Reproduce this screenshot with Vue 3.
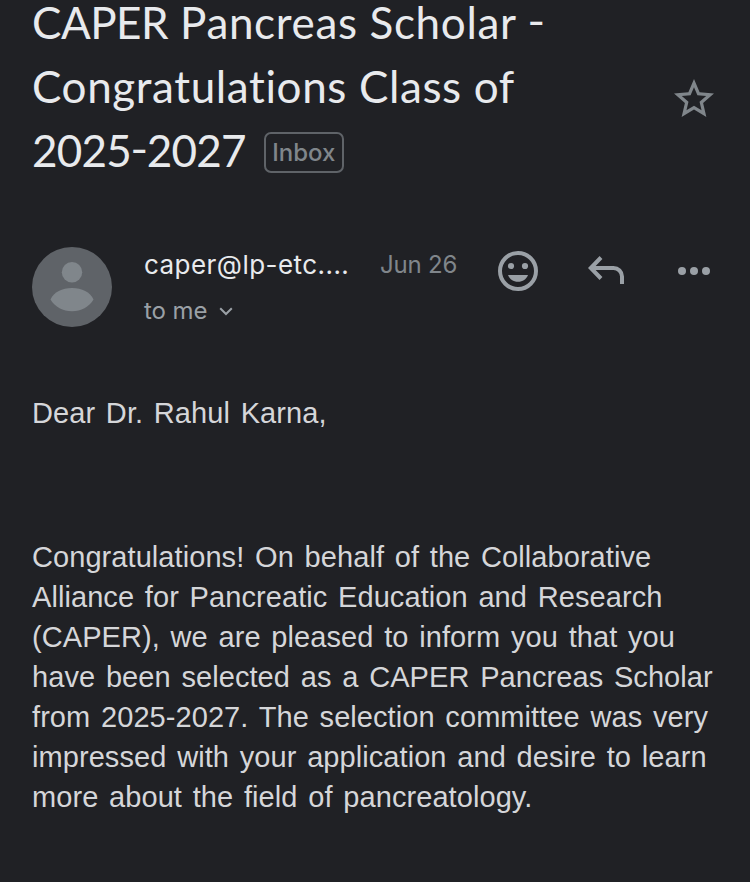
<template>
  <div class="mail">
    <header class="subject">
      <h1>
        <span class="line first"><span class="caps">CAPER</span> Pancreas Scholar <i>-</i></span>
        <span class="line second">Congratulations Class of</span>
        <span class="line third"><span class="years">2025<i>-</i>2027</span><span class="label">Inbox</span></span>
      </h1>
      <button class="star" aria-label="Star">
        <svg width="48" height="48" viewBox="0 0 24 24">
          <path d="M22 9.24l-7.19-.62L12 2 9.19 8.63 2 9.24l5.46 4.73L5.82 21 12 17.27 18.18 21l-1.63-7.03L22 9.24zM12 15.4l-3.76 2.27 1-4.28-3.32-2.88 4.38-.38L12 6.1l1.71 4.04 4.38.38-3.32 2.88 1 4.28L12 15.4z" />
        </svg>
      </button>
    </header>

    <section class="sender">
      <svg class="avatar" width="80" height="80" viewBox="0 0 80 80">
        <circle cx="40" cy="40" r="40" fill="#5f6368" />
        <circle cx="40" cy="25.3" r="10.2" fill="#80868b" />
        <path d="M18.5 52.5C22 45 30 41 40 41s18 4 21.5 11.5C57 60 49 64.3 40 64.3S23 60 18.5 52.5z" fill="#80868b" />
      </svg>
      <div class="who">
        <div class="from">
          <span class="address">{{ address }}</span>
          <span class="date">{{ date }}</span>
        </div>
        <div class="to">
          <span>to me</span>
          <svg width="14" height="9" viewBox="0 0 14 9">
            <path d="M1.2 1.2L7 7l5.8-5.8" fill="none" stroke="#9aa0a6" stroke-width="2" />
          </svg>
        </div>
      </div>
      <div class="actions">
        <svg width="40" height="40" viewBox="0 0 40 40">
          <circle cx="20" cy="20" r="18" fill="none" stroke="#9aa0a6" stroke-width="4" />
          <circle cx="13" cy="15" r="3.1" />
          <circle cx="27" cy="15" r="3.1" />
          <path d="M10 24h20c-1.5 4-5.3 6.800-10 6.800S11.5 28 10 24z" />
        </svg>
        <svg width="36" height="30" viewBox="0 0 36 30">
          <path d="M13 1.5L2.8 12 13 22.5M3 12h22.500a8.500 8.500 0 0 1 8.500 8.500V28" fill="none" stroke="#9aa0a6" stroke-width="4" />
        </svg>
        <svg width="32" height="8" viewBox="0 0 32 8">
          <circle cx="4" cy="4" r="4" />
          <circle cx="16" cy="4" r="4" />
          <circle cx="28" cy="4" r="4" />
        </svg>
      </div>
    </section>

    <article class="body">
      <p>Dear Dr. Rahul Karna,</p>
      <p class="message">
        <span v-for="line in lines" :key="line">{{ line }}</span>
      </p>
    </article>
  </div>
</template>

<script setup>
const address = 'caper@lp-etc....'
const date = 'Jun 26'

const lines = [
  'Congratulations! On behalf of the Collaborative',
  'Alliance for Pancreatic Education and Research',
  '(CAPER), we are pleased to inform you that you',
  'have been selected as a CAPER Pancreas Scholar',
  'from 2025-2027. The selection committee was very',
  'impressed with your application and desire to learn',
  'more about the field of pancreatology.',
]
</script>

<style>
body {
  margin: 0;
  background: #202125;
}
</style>

<style scoped>
.mail {
  box-sizing: border-box;
  height: 882px;
  padding: 0 32px;
  overflow: hidden;
  background: #202125;
  color: #e8eaed;
}

.subject {
  display: flex;
  justify-content: space-between;
  height: 247px;
}

h1 {
  margin: 0;
  font: 400 44px/64px Lato, sans-serif;
}

h1 i {
  display: inline-block;
  font-style: normal;
  transform: translateY(-2px) scaleX(1.1);
}

.line {
  display: block;
  height: 64px;
  white-space: pre;
}

.first {
  height: 54px;
  line-height: 44px;
  letter-spacing: 0.65px;
}

.caps {
  letter-spacing: -0.5px;
}

.second {
  letter-spacing: 0.62px;
}

.third {
  display: flex;
  align-items: center;
}

.years {
  letter-spacing: -0.75px;
}

.label {
  box-sizing: border-box;
  width: 80px;
  height: 41px;
  margin: 5px 0 0 18px;
  border: 2px solid #5f6368;
  border-radius: 7px;
  color: #80868b;
  font: 500 24px/37px Inter, sans-serif;
  text-align: center;
}

.star {
  height: 48px;
  margin: 75px 0 0;
  padding: 0;
  border: 0;
  background: none;
}

.star svg {
  display: block;
  fill: #80868b;
}

.sender {
  display: flex;
  height: 80px;
}

.who {
  width: 354px;
  margin-left: 32px;
  font-family: Inter, sans-serif;
}

.from {
  display: flex;
  height: 36px;
  line-height: 36px;
}

.address {
  width: 236px;
  font-size: 26px;
  letter-spacing: 0.45px;
}

.date {
  color: #80868b;
  font-size: 24px;
  letter-spacing: -0.2px;
}

.to {
  display: flex;
  align-items: center;
  gap: 12px;
  height: 36px;
  margin-top: 9px;
  color: #9aa0a6;
  font-size: 24px;
  letter-spacing: -0.1px;
}

.to svg {
  margin-top: 2px;
}

.actions {
  display: flex;
  align-items: center;
  height: 48px;
  fill: #9aa0a6;
}

.actions svg + svg {
  margin-left: 50px;
}

.actions svg:last-child {
  margin-left: 54px;
}

.body {
  color: #d5d6d9;
  font: 29px/40px "Liberation Sans", Arial, sans-serif;
  letter-spacing: 0.07px;
  word-spacing: 2.6px;
}

.body p {
  margin: 66px 0 0;
}

.body .message {
  margin-top: 104px;
}

.message span {
  display: block;
  white-space: nowrap;
}
</style>
